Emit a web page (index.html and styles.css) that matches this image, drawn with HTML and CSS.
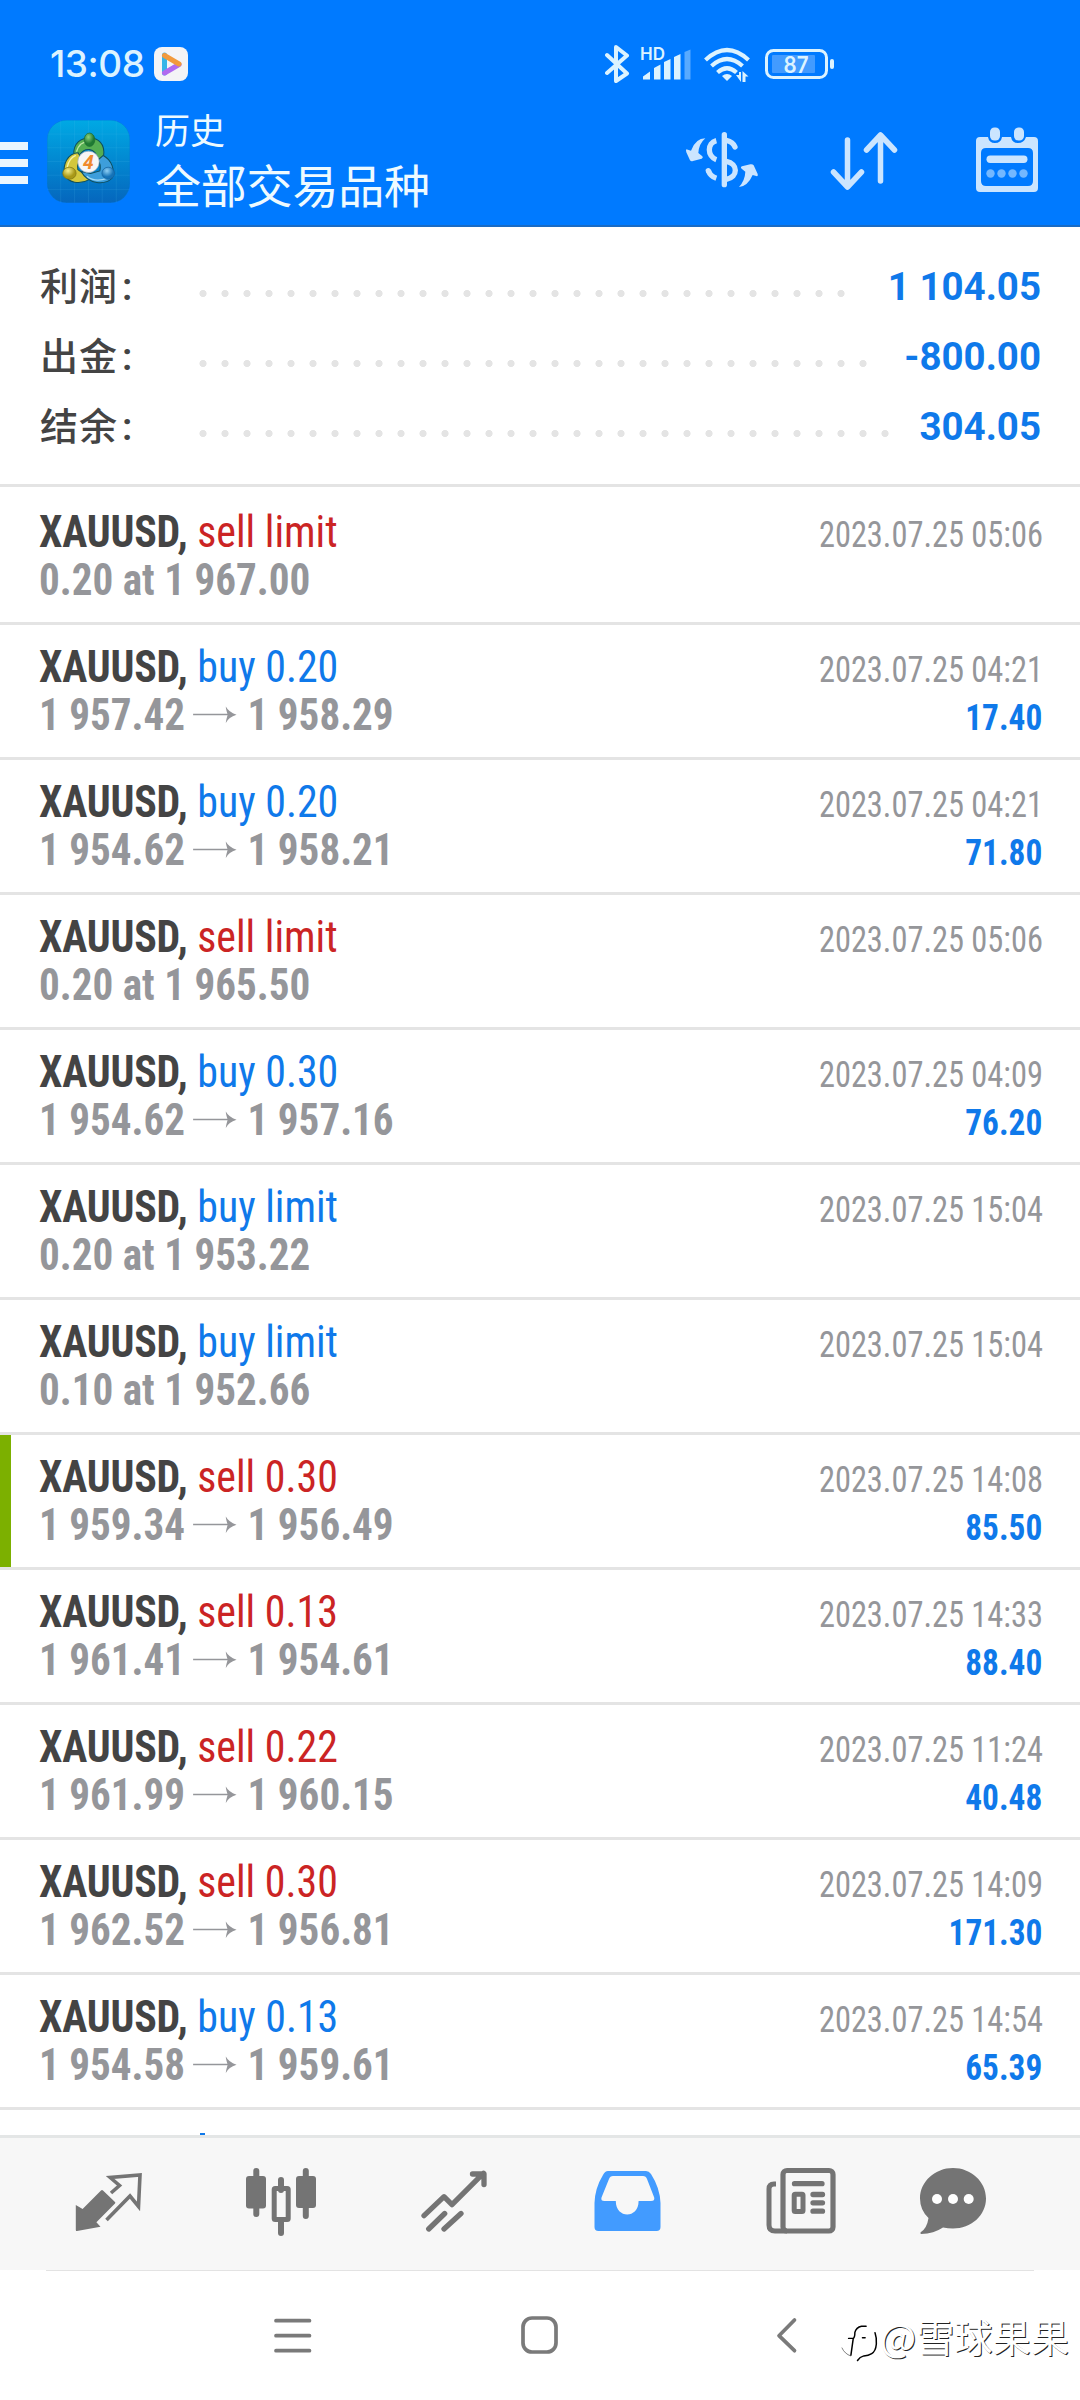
FILE: index.html
```html
<!DOCTYPE html>
<html lang="zh-CN">
<head>
<meta charset="utf-8">
<title>历史</title>
<link rel="stylesheet" href="styles.css">
</head>
<body>
<header class="header">
  <div class="status">
    <span class="clock">13:08</span>
    <svg class="video" width="34" height="34" viewBox="0 0 34 34"><rect width="34" height="34" rx="8" fill="#f4f4f6"/><path d="M10.500 8V26" stroke="#35b5e8" stroke-width="5" stroke-linecap="round"/><path d="M10.500 26 25 17.500" stroke="#b06af0" stroke-width="5" stroke-linecap="round"/><path d="M10.500 8.500 25 17" stroke="#f29a3c" stroke-width="5" stroke-linecap="round"/><path d="M13 13.500V21l6-3.500z" fill="#f4f4f6"/></svg>
    <svg class="signals" width="230" height="40" viewBox="605 44 230 40" fill="none" stroke="#dcf3ff">
      <path d="M607 55 627 73.500 616 81V47l11 8.500L607 73" stroke-width="4" stroke-linejoin="round" stroke-linecap="round"/>
      <g fill="#dcf3ff" stroke="none">
        <path d="M643 79.500v-3l7-5v8zM654 79.500V68l6.500-3.500v15zM664 79.500V62l6.500-3v20.500zM674 79.500V57l6.500-3v25.500z"/>
        <path d="M684.500 79.500V52l6-2.500v30z" opacity=".4"/>
        <path d="M722 76q5-4 10 0l-5 5z"/>
        <path d="M736 75h3v-3h2v10zM742.500 82V71l6 5.500h-3V82z"/>
      </g>
      <g stroke-width="4.200"><path d="M705.500 60q21.500-20 43 0"/><path d="M711.500 66q15.500-14 31 0"/><path d="M717.500 72.500q9.500-8.500 19 0"/></g>
      <rect x="766.500" y="50.500" width="60" height="27" rx="7" stroke-width="3"/>
      <rect x="772" y="55" width="43" height="18" rx="1" fill="#429bff" stroke="none"/>
      <rect x="830" y="59" width="4" height="10" rx="2" fill="#dcf3ff" stroke="none"/>
      <g fill="#dcf3ff" stroke="none" class="sigtext"><text x="640" y="60" font-size="17">HD</text><text x="783.500" y="72.500" font-size="23" textLength="25" lengthAdjust="spacingAndGlyphs">87</text></g>
    </svg>
  </div>
  <div class="toolbar">
    <div class="menu"><i></i><i></i><i></i></div>
    <svg class="app" width="83" height="83" viewBox="20 28 248 248">
      <defs>
        <linearGradient id="bg" x2="0" y2="1"><stop offset="0" stop-color="#00a9e4"/><stop offset="1" stop-color="#0566bd"/></linearGradient>
        <radialGradient id="gg" cx=".4" cy=".3"><stop offset="0" stop-color="#8fd27c"/><stop offset="1" stop-color="#1f7a33"/></radialGradient>
        <radialGradient id="gy" cx=".4" cy=".3"><stop offset="0" stop-color="#f5ee8a"/><stop offset="1" stop-color="#a89817"/></radialGradient>
        <radialGradient id="gb" cx=".4" cy=".3"><stop offset="0" stop-color="#8fd0f5"/><stop offset="1" stop-color="#1573b8"/></radialGradient>
      </defs>
      <rect x="20.500" y="28.500" width="247" height="247" rx="58" fill="url(#bg)" stroke="#0a72c8"/>
      <path d="M61 29V275M102 29V275M144 29V275M185 29V275M227 29V275M21 70H267M21 111H267M21 152H267M21 193H267M21 236H267" stroke="#5cc0f0" stroke-opacity=".2" stroke-width="2"/>
      <g stroke="#0f4f5e" stroke-width="3">
        <path d="M100 133C98 96 122 82 147 82S195 98 189 136L174 148Q166 118 147 116T118 132z" fill="#55ae52"/>
        <path d="M113 126C82 128 66 160 73 190 82 216 118 222 146 206L130 190 112 176Q108 156 124 146z" fill="#d3c73c"/>
        <path d="M188 134C214 148 224 178 214 202 194 222 144 222 122 182L150 188 178 180Q182 160 172 148z" fill="#3d9edb"/>
      </g>
      <path d="M108 123q8-30 38-32" stroke="#bfe6a5" stroke-width="4" fill="none"/><path d="M80 170q6-28 26-36" stroke="#f6f2a8" stroke-width="4" fill="none"/><path d="M139 196q24 20 62 6" stroke="#a5dbf7" stroke-width="4" fill="none"/>
      <ellipse cx="147" cy="87" rx="16" ry="20" fill="url(#gg)" stroke="#1d6b30" stroke-width="2"/>
      <ellipse cx="87" cy="187" rx="20" ry="18" fill="url(#gy)" stroke="#7d7213" stroke-width="2"/>
      <ellipse cx="203" cy="187" rx="19" ry="18" fill="url(#gb)" stroke="#14609c" stroke-width="2"/>
      <circle cx="144" cy="153" r="32" fill="#f6f6f6" stroke="#9ab" stroke-width="2"/>
      <text x="144" y="173" text-anchor="middle" class="four" font-size="56" fill="#f08a2c">4</text>
    </svg>
    <div class="heading"><div class="sub">历史</div><div class="name">全部交易品种</div></div>
    <svg class="act dollar" width="74" height="58" viewBox="16 62 222 174" fill="none" stroke="#cbe5ff" stroke-width="16">
      <path d="M134 73V223" stroke-linecap="round"/>
      <path d="M110 91C82 98 82 138 110 148M86 181Q92 198 110 204"/>
      <path d="M140 90Q160 94 166 110" stroke-linecap="round"/>
      <path d="M86 181l1 2" stroke-linecap="round"/>
      <path d="M140 153C176 160 176 200 140 207"/>
      <g fill="#cbe5ff" stroke="none"><path d="M77 84Q48 84 34 121L20 117Q18 120 20 126L31 150Q34 154 40 152L66 145Q72 142 68 138L56 128Q58 100 77 84z"/><path d="M178 230Q204 228 219 194L232 198Q236 197 234 191L222 165Q219 161 212 162L187 168Q181 171 186 175L197 184Q196 210 178 230z"/></g>
    </svg>
    <svg class="act sort" width="68" height="62" viewBox="831 131 68 62" fill="none" stroke="#cbe5ff" stroke-width="5.500" stroke-linecap="round" stroke-linejoin="round"><path d="M848.500 140V186M834.500 172l14 15 14-15M881.500 181V136M867.500 150l14-15 14 15"/></svg>
    <svg class="act cal" width="64" height="66" viewBox="976 127 64 66">
      <path fill="#cbe5ff" fill-rule="evenodd" d="M981 137h8q1 6 7 6t7-6h9q1 6 7 6t8-6h8q4 0 4 4v47q0 4-4 4h-54q-4 0-4-4v-47q0-4 4-4zM987 148q-5 0-5 5v28q0 5 5 5h42q5 0 5-5v-28q0-5-5-5z"/>
      <rect x="991" y="127.500" width="10" height="13" rx="4.500" fill="#cbe5ff"/><rect x="1015" y="127.500" width="10" height="13" rx="4.500" fill="#cbe5ff"/>
      <rect x="987.500" y="155.500" width="41" height="7.500" rx="3.700" fill="#cbe5ff"/>
      <g fill="#74b8ff"><circle cx="991.500" cy="173.500" r="4.200"/><circle cx="1002.500" cy="173.500" r="4.200"/><circle cx="1013.500" cy="173.500" r="4.200"/><circle cx="1024.500" cy="173.500" r="4.200"/></g>
    </svg>
  </div>
</header>
<main class="list">
  <section class="summary">
    <div class="total"><span class="label">利润<span class="colon">:</span></span><span class="leader"><i></i></span><b>1 104.05</b></div>
    <div class="total"><span class="label">出金<span class="colon">:</span></span><span class="leader"><i></i></span><b>-800.00</b></div>
    <div class="total"><span class="label">结余<span class="colon">:</span></span><span class="leader"><i></i></span><b>304.05</b></div>
  </section>
  <section id="deals"></section>
</main>
<nav class="tabs">
  <svg width="1080" height="80" viewBox="0 2160 1080 80" fill="#747474" stroke="none">
    <path d="M75.800 2205 82.600 2209 101 2190.500q1-1 2 0l12 11.500q.7.800 0 1.500L96.400 2222.300l4.100 4.400-23.500 4.400q-1.200 0-1.200-1.200z"/>
    <g fill="none" stroke="#747474">
      <path d="M111 2193l8.500-7.500-9.300-8 29.800-2.500-1.500 31.500-8.500-10.500-23.500 24" stroke-width="3.600"/>
      <path d="M256.300 2171v43M281 2180v10M281 2220v13M305.800 2171v45" stroke-width="6" stroke-linecap="round"/>
      <path d="M424 2215.700l20-19 8 8 31.500-31.500M472.500 2174h11.500v10.500M428.700 2229l16-15.500M444 2229l17-15.500" stroke-width="5.300" stroke-linecap="round" stroke-linejoin="round"/>
      <rect x="274.200" y="2188.500" width="14" height="31" rx="1" stroke-width="5"/>
      <rect x="783" y="2170.500" width="50" height="60.500" rx="4" stroke-width="5.200"/>
      <path d="M776 2184h-2q-5 0-5 5v36q0 6 6 6h12" stroke-width="5"/>
      <path d="M794.500 2183.700h27.500M813 2194.500h9.500M813 2202.800h9.500M813 2211.200h9.500" stroke-width="5.300" stroke-linecap="round"/>
      <rect x="794.200" y="2194.200" width="8.800" height="17.300" rx="1" stroke-width="5"/>
    </g>
    <rect x="246" y="2176" width="20" height="32.500" rx="3"/><rect x="296" y="2176" width="20" height="32" rx="3"/>
    <path fill="#429bff" fill-rule="evenodd" d="M608 2171h38q3 0 5 3 9 14 9.500 29v24q0 4-4 4h-58q-4 0-4-4v-24q.5-15 8.500-28 2-4 5-4zM613 2176q-3 0-4 3l-7.500 18.500q-1 3.500 3 3.500h11.300c0 18 22.800 18 22.800 0H651q4 0 3.200-3.500L647 2179q-1-3-4-3z"/>
    <path d="M953 2168c18 0 33 13.500 33 30.500s-15 30-33 30q-5 0-10-1-9 6-22 6.500-1.500-1 0-2 6-4 7.500-14-8.500-8-8.500-19.500c0-17 15-30.500 33-30.500z"/>
    <g fill="#fff"><circle cx="937" cy="2199" r="5"/><circle cx="953" cy="2199" r="5"/><circle cx="968.700" cy="2199" r="5"/></g>
  </svg>
</nav>
<footer class="sysnav">
  <svg width="1080" height="60" viewBox="0 2306 1080 60" fill="none" stroke="#7a7a7a" stroke-width="3.700" stroke-linecap="round" stroke-linejoin="round">
    <path d="M276 2320.700h33.500M276 2335.700h33.500M276 2350.700h33.500"/><rect x="523" y="2318" width="33" height="34" rx="9"/><path d="M794.500 2320l-15.500 15.700 15.500 15"/>
  </svg>
  <div class="mark">
    <svg width="37" height="40" viewBox="30 75 112 120" fill="none" stroke="#000" stroke-width="4.500" stroke-linecap="round"><path d="M53 121h14q5-3 5-18 4-16 20-19h14M133 104q5 14 4 34-2 22-14 29-10 6-24 7-12 3-19 14M67 122l-7 50M95 119h8"/><path d="M33 150q8 18 26 24" stroke-width="1.500"/></svg>
    <span>@雪球果果</span>
  </div>
</footer>
<script src="deals.js"></script>
</body>
</html>
```
FILE: deals.js
```js
const deals = [
  ['sell', 'limit', '0.20 at 1 967.00', '05:06'],
  ['buy', '0.20', '1 957.42', '04:21', '1 958.29', '17.40'],
  ['buy', '0.20', '1 954.62', '04:21', '1 958.21', '71.80'],
  ['sell', 'limit', '0.20 at 1 965.50', '05:06'],
  ['buy', '0.30', '1 954.62', '04:09', '1 957.16', '76.20'],
  ['buy', 'limit', '0.20 at 1 953.22', '15:04'],
  ['buy', 'limit', '0.10 at 1 952.66', '15:04'],
  ['sell', '0.30', '1 959.34', '14:08', '1 956.49', '85.50', 'marked'],
  ['sell', '0.13', '1 961.41', '14:33', '1 954.61', '88.40'],
  ['sell', '0.22', '1 961.99', '11:24', '1 960.15', '40.48'],
  ['sell', '0.30', '1 962.52', '14:09', '1 956.81', '171.30'],
  ['buy', '0.13', '1 954.58', '14:54', '1 959.61', '65.39'],
];
const arrow = '<svg class="arrow" width="47" height="18" viewBox="0 0 47 18"><path d="M0 8.500H40" stroke="#95969a" stroke-width="1.500"/><path d="M35 .5Q38 6 46.500 8.700 38 11 35 17q0-2 2-8.300Q35 3 35 .5z" fill="#95969a"/></svg>';
document.getElementById('deals').innerHTML = deals.map(([side, what, from, time, to, profit, mark]) => `
  <article class="deal ${mark || ''}">
    <div class="line"><div class="title"><b>XAUUSD,</b> <span class="${side}">${side} ${what}</span></div><div class="date">2023.07.25 ${time}</div></div>
    <div class="line"><div class="price">${from}${to ? arrow + to : ''}</div><div class="profit">${profit || ''}</div></div>
  </article>`).join('') + '<div class="deal next"><i></i></div>';
```
FILE: styles.css
```css
* { box-sizing: border-box; }
body {
  margin: 0;
  width: 1080px;
  height: 2400px;
  overflow: hidden;
  display: flex;
  flex-direction: column;
  background: #fff;
  font-family: Roboto, "Noto Sans CJK SC", sans-serif;
}
svg { display: block; flex: none; }

.header { height: 227px; background: #007aff; color: #fff; border-bottom: 2px solid #1a6bc4; }
.status { display: flex; align-items: center; height: 128px; padding-left: 50px; }
.clock { font: 500 37px/40px Inter, sans-serif; color: #dcf3ff; width: 104px; letter-spacing: -.5px; }
.signals { margin-left: 417px; }
.sigtext { font-family: Inter, sans-serif; font-weight: 600; }
.toolbar { display: flex; height: 97px; margin-top: -11px; }
.menu { width: 28px; padding-top: 25px; display: flex; flex-direction: column; gap: 9px; }
.menu i { height: 8px; background: #eaf6ff; }
.app { margin: 3px 0 0 19px; }
.four { font-family: "Open Sans", sans-serif; font-weight: 700; font-style: italic; }
.heading { width: 555px; flex: none; padding-left: 25px; color: #eefaff; }
.sub { font-size: 35px; line-height: 40px; margin-top: -4px; }
.name { font-size: 46px; line-height: 54px; margin-top: 7px; letter-spacing: -.2px; }
.dollar { margin-top: 14px; }
.sort { margin: 14px 0 0 71px; }
.cal { margin: 10px 0 0 77px; }

.list { height: 1908px; overflow: hidden; flex: none; }
.summary { height: 257px; padding: 22px 40px 0; color: #444; }
.total { display: flex; height: 70px; line-height: 70px; font-size: 39px; align-items: baseline; }
.label { width: 152px; font-weight: 500; font-family: "Noto Sans CJK SC", sans-serif; font-size: 38px; letter-spacing: 1px; }
.colon { margin-left: 4px; font-family: Roboto, sans-serif; font-weight: 600; }
.leader { flex: 1; margin-right: 20px; align-self: flex-start; padding-top: 41px; }
.leader i {
  display: block;
  height: 7px;
  width: round(down, 100%, 22px);
  background: radial-gradient(circle, #e4e4e4 3.200px, transparent 3.900px) 0 0 / 22px 7px repeat-x;
}
.total b { color: #0f79ea; font-size: 38.500px; transform: translateX(1px); }

.deal { height: 135px; border-top: 3px solid #e4e4e4; padding: 18px 38px 0 39px; }
.deal:first-child { height: 138px; padding-top: 21px; }
.marked { background: linear-gradient(#7cb000, #7cb000) 0 0 / 11px 100% no-repeat; }
.next { padding: 23px 0 0 200px; }
.next i { display: block; width: 5px; height: 10px; background: #0f79ea; }
.line { display: flex; justify-content: space-between; align-items: baseline; height: 48px; line-height: 48px; font-family: "Roboto Condensed", Roboto, sans-serif; }
.title, .price { font-size: 44px; transform: scaleX(.952); transform-origin: left; white-space: pre; }
.title b { color: #444; letter-spacing: -.2px; }
.buy { color: #0f79ea; }
.sell { color: #cb2424; }
.price { display: flex; align-items: center; font-weight: 700; color: #95969a; transform: scaleX(.934); }
.arrow { margin: 0 11px 0 9px; }
.date { font-size: 36px; color: #95969a; transform: translateX(1px) scaleX(.9); transform-origin: right; }
.profit { font-size: 36px; font-weight: 700; color: #0f79ea; transform: scaleX(.925); transform-origin: right; }

.tabs { height: 135px; flex: none; background: #f7f7f7; border-top: 3px solid #e4e6e6; padding-top: 22px; }
.sysnav { height: 130px; position: relative; padding-top: 36px; }
.sysnav::before { content: ""; display: block; height: 1px; margin: -36px 46px 35px; background: #e3e3e3; }
.mark { position: absolute; left: 841px; top: 53px; display: flex; align-items: flex-start; }
.mark span {
  font: 400 38.200px/42px "Noto Sans CJK SC", sans-serif;
  color: #fff;
  text-shadow: 1px 1px 0 #222;
  margin: -8px 0 0 2px;
}
```
